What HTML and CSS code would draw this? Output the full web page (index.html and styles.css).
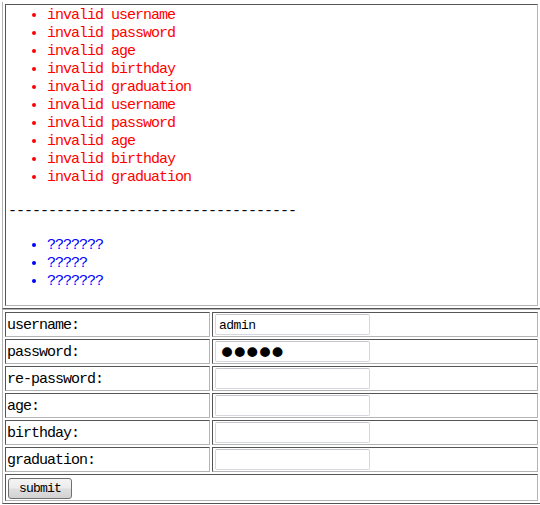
FILE: index.html
```html
<!DOCTYPE html>
<html lang="en">
<head>
    <meta charset="UTF-8">
    <title>Register</title>
    <link rel="stylesheet" href="styles.css">
</head>
<body>

    <!-- validation messages -->
    <table class="frame messages">
        <tr>
            <td>
                <ul class="errors">
                    <li>invalid username</li>
                    <li>invalid password</li>
                    <li>invalid age</li>
                    <li>invalid birthday</li>
                    <li>invalid graduation</li>
                    <li>invalid username</li>
                    <li>invalid password</li>
                    <li>invalid age</li>
                    <li>invalid birthday</li>
                    <li>invalid graduation</li>
                </ul>
                <div class="divider">------------------------------------</div>
                <ul class="notes">
                    <li>???????</li>
                    <li>?????</li>
                    <li>???????</li>
                </ul>
            </td>
        </tr>
    </table>

    <!-- register form -->
    <form action="#" method="post">
        <table class="frame form">
            <tr>
                <td class="label">username:</td>
                <td><input type="text" name="username" value="admin"></td>
            </tr>
            <tr>
                <td class="label">password:</td>
                <td><input type="password" name="password" class="secret" value="admin"></td>
            </tr>
            <tr>
                <td class="label">re-password:</td>
                <td><input type="password" name="repassword" class="secret"></td>
            </tr>
            <tr>
                <td class="label">age:</td>
                <td><input type="text" name="age"></td>
            </tr>
            <tr>
                <td class="label">birthday:</td>
                <td><input type="text" name="birthday"></td>
            </tr>
            <tr>
                <td class="label">graduation:</td>
                <td><input type="text" name="graduation"></td>
            </tr>
            <tr>
                <td colspan="2" class="actions"><button type="submit">submit</button></td>
            </tr>
        </table>
    </form>

</body>
</html>
```

FILE: styles.css
```css
/* General Styling */
body {
    margin: 0;
    padding: 0 0 0 2px;
    font-family: 'Liberation Mono', 'DejaVu Sans Mono', monospace;
    font-size: 15px;
    letter-spacing: -1px;
    line-height: 18px;
    color: #000;
    background: #fff;
}

form {
    margin: 0;
}

/* Old-school bordered tables */
.frame {
    width: 539px;
    border-collapse: separate;
    border-spacing: 2px;
    border-left: 1px solid #b4b4b4;
    border-top: 1px solid #b4b4b4;
    border-right: 1px solid #555;
    border-bottom: 1px solid #555;
}

.frame td {
    padding: 1px;
    border-left: 1px solid #555;
    border-top: 1px solid #555;
    border-right: 1px solid #b4b4b4;
    border-bottom: 1px solid #b4b4b4;
    vertical-align: middle;
}

.messages {
    border-top: none;
    margin-top: 2px;
}

.messages td {
    padding-top: 2px;
}

/* Message lists */
ul {
    margin: 0;
    padding-left: 40px;
}

.errors {
    color: #f00;
    margin-bottom: 16px;
}

.notes {
    color: #00f;
    margin-top: 16px;
    margin-bottom: 13px;
}

.divider {
    padding-left: 1px;
}

/* Form rows */
.form td {
    height: 21px;
    line-height: 21px;
}

.form .label {
    width: 201px;
    height: 19px;
    padding-top: 3px;
    padding-bottom: 1px;
    line-height: 19px;
}

input {
    display: block;
    box-sizing: border-box;
    width: 155px;
    height: 21px;
    margin: 0 0 0 1px;
    padding: 1px 3px 0;
    border: 1px solid #d6d6de;
    border-top-color: #c4c4cc;
    border-radius: 2px;
    font-family: 'Liberation Mono', monospace;
    font-size: 13px;
    letter-spacing: -0.5px;
    color: #000;
    background: #fff;
}

input.secret {
    font-family: 'DejaVu Sans', sans-serif;
    font-size: 34px;
    letter-spacing: -7.4px;
    padding: 2px 1px 0;
}

.actions {
    vertical-align: top;
}

.form .actions {
    height: 23px;
}

button {
    display: block;
    box-sizing: border-box;
    height: 21px;
    margin: 2px 0 0 1px;
    padding: 0 10px;
    border: 1px solid #707070;
    border-radius: 3px;
    background: linear-gradient(#f4f4f4, #ececec 45%, #dedede 55%, #d2d2d2);
    font-family: 'Liberation Mono', monospace;
    font-size: 13px;
    letter-spacing: -0.8px;
    line-height: 17px;
    color: #000;
    cursor: pointer;
}
```
